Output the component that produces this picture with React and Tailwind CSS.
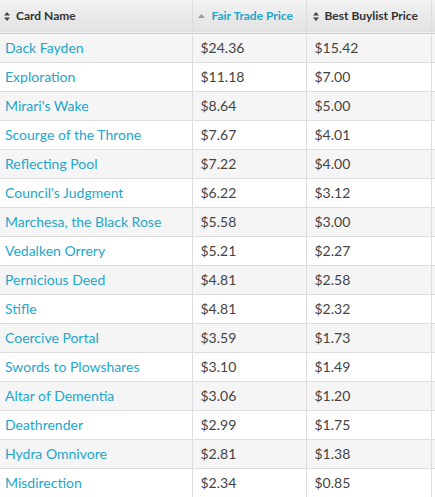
import React from 'react';

const cards = [
  ['Dack Fayden', '$24.36', '$15.42'],
  ['Exploration', '$11.18', '$7.00'],
  ["Mirari's Wake", '$8.64', '$5.00'],
  ['Scourge of the Throne', '$7.67', '$4.01'],
  ['Reflecting Pool', '$7.22', '$4.00'],
  ["Council's Judgment", '$6.22', '$3.12'],
  ['Marchesa, the Black Rose', '$5.58', '$3.00'],
  ['Vedalken Orrery', '$5.21', '$2.27'],
  ['Pernicious Deed', '$4.81', '$2.58'],
  ['Stifle', '$4.81', '$2.32'],
  ['Coercive Portal', '$3.59', '$1.73'],
  ['Swords to Plowshares', '$3.10', '$1.49'],
  ['Altar of Dementia', '$3.06', '$1.20'],
  ['Deathrender', '$2.99', '$1.75'],
  ['Hydra Omnivore', '$2.81', '$1.38'],
  ['Misdirection', '$2.34', '$0.85'],
];

// unsorted column marker
function BothArrows() {
  return (
    <svg width="6" height="9" viewBox="0 0 6 9" className="mr-[6px] shrink-0">
      <path d="M3 0L6 3.6H0Z" fill="#444" />
      <path d="M3 9L6 5.4H0Z" fill="#444" />
    </svg>
  );
}

function UpArrow() {
  return (
    <svg width="7" height="4" viewBox="0 0 7 4" className="mr-[7px] shrink-0">
      <path d="M3.5 0L7 4H0Z" fill="#999" />
    </svg>
  );
}

export default function App() {
  return (
    <div className="w-[435px] h-[497px] overflow-hidden bg-white" style={{ fontFamily: 'Lato, "Open Sans", sans-serif' }}>
      <table className="border-collapse table-fixed w-[460px]">
        <colgroup>
          <col className="w-[192px]" />
          <col className="w-[114px]" />
          <col className="w-[125px]" />
          <col className="w-[29px]" />
        </colgroup>
        <thead>
          <tr className="h-[33px] bg-gradient-to-b from-[#f2f2f2] to-[#e2e2e2] border-b border-[#cccccc]">
            <th className="px-[4px] text-left font-bold text-[12px] text-[#333] border-r border-[#dcdcdc]">
              <div className="flex items-center"><BothArrows />Card Name</div>
            </th>
            <th className="pl-[5px] text-left font-bold text-[12px] text-[#22a7cb] border-r border-[#dcdcdc]">
              <div className="flex items-center"><UpArrow />Fair Trade Price</div>
            </th>
            <th className="pl-[6px] text-left font-bold text-[12px] text-[#333] border-r border-[#dcdcdc]">
              <div className="flex items-center"><BothArrows />Best Buylist Price</div>
            </th>
            <th></th>
          </tr>
        </thead>
        <tbody>
          {cards.map(([name, fair, buy], i) => (
            <tr key={name} className={`h-[29px] border-b border-[#dddddd] ${i % 2 === 0 ? 'bg-[#f5f5f5]' : 'bg-white'}`}>
              <td className="pl-[5px] text-[14px] text-[#22a7cb] border-r border-[#dddddd] whitespace-nowrap">{name}</td>
              <td className="pl-[8px] text-[14px] text-[#444] border-r border-[#dddddd]">{fair}</td>
              <td className="pl-[8px] text-[14px] text-[#444] border-r border-[#dddddd]">{buy}</td>
              <td></td>
            </tr>
          ))}
        </tbody>
      </table>
    </div>
  );
}
